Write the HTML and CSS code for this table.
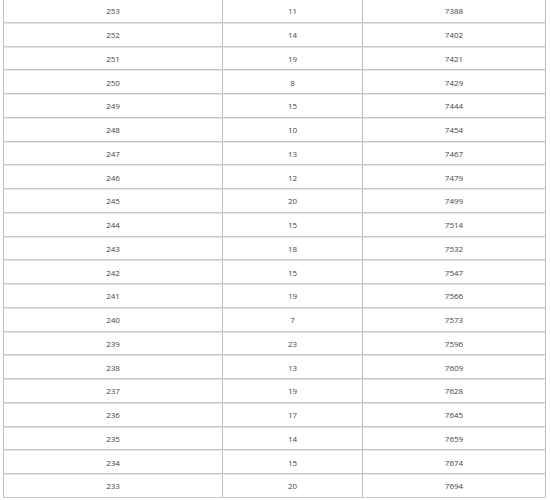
FILE: index.html
```html
<!DOCTYPE html>
<html>
<head>
<meta charset="utf-8">
<link rel="stylesheet" href="styles.css">
</head>
<body>
<table class="grid">
<tbody>
<tr><td>253</td><td>11</td><td>7388</td></tr>
<tr><td>252</td><td>14</td><td>7402</td></tr>
<tr><td>251</td><td>19</td><td>7421</td></tr>
<tr><td>250</td><td>8</td><td>7429</td></tr>
<tr><td>249</td><td>15</td><td>7444</td></tr>
<tr><td>248</td><td>10</td><td>7454</td></tr>
<tr><td>247</td><td>13</td><td>7467</td></tr>
<tr><td>246</td><td>12</td><td>7479</td></tr>
<tr><td>245</td><td>20</td><td>7499</td></tr>
<tr><td>244</td><td>15</td><td>7514</td></tr>
<tr><td>243</td><td>18</td><td>7532</td></tr>
<tr><td>242</td><td>15</td><td>7547</td></tr>
<tr><td>241</td><td>19</td><td>7566</td></tr>
<tr><td>240</td><td>7</td><td>7573</td></tr>
<tr><td>239</td><td>23</td><td>7596</td></tr>
<tr><td>238</td><td>13</td><td>7609</td></tr>
<tr><td>237</td><td>19</td><td>7628</td></tr>
<tr><td>236</td><td>17</td><td>7645</td></tr>
<tr><td>235</td><td>14</td><td>7659</td></tr>
<tr><td>234</td><td>15</td><td>7674</td></tr>
<tr><td>233</td><td>20</td><td>7694</td></tr>
</tbody>
</table>
</body>
</html>
```
FILE: styles.css
```css
html, body {
  margin: 0;
  padding: 0;
  background: #fff;
}
body {
  padding: 0 4px 0 3px;
  margin-top: -1px;
  font-family: "Open Sans", "Liberation Sans", sans-serif;
  font-size: 8px;
  color: #444;
}
.grid {
  width: 543px;
  border-collapse: separate;
  border-spacing: 0;
  table-layout: fixed;
}
.grid td {
  height: 21.75px;
  padding: 0;
  text-align: center;
  vertical-align: middle;
  border-right: 1px solid #bdbdbd;
  border-top: 1px solid #e4e4e4;
  border-bottom: 1px solid #c6c6c6;
}
.grid td:first-child {
  border-left: 1px solid #bdbdbd;
}
.grid td:nth-child(1) { width: 218px; }
.grid td:nth-child(2) { width: 139px; }
```
